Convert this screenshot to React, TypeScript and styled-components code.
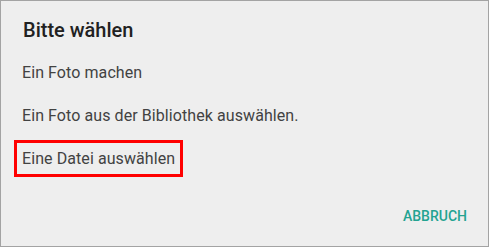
import React from "react";
import styled, { createGlobalStyle } from "styled-components";

// Auswahl-Dialog (Quelle für Datei wählen)
const options = [
  { id: "camera", label: "Ein Foto machen" },
  { id: "library", label: "Ein Foto aus der Bibliothek auswählen." },
  { id: "file", label: "Eine Datei auswählen", highlighted: true },
];

const GlobalStyle = createGlobalStyle`
  html, body {
    margin: 0;
    padding: 0;
    background: #eeeeee;
  }
  * {
    box-sizing: border-box;
  }
`;

const App: React.FC = () => {
  return (
    <>
      <GlobalStyle />
      <Dialog>
        <Title>Bitte wählen</Title>
        <OptionList>
          {options.map((option) => (
            <OptionRow key={option.id}>
              <OptionLabel $highlighted={!!option.highlighted}>
                {option.label}
              </OptionLabel>
            </OptionRow>
          ))}
        </OptionList>
        <Footer>
          <TextButton type="button">ABBRUCH</TextButton>
        </Footer>
      </Dialog>
    </>
  );
};

export default App;

const Dialog = styled.div`
  width: 489px;
  height: 247px;
  display: flex;
  flex-direction: column;
  background: #eeeeee;
  border: 1px solid #a3a3a3;
  font-family: Roboto, "Liberation Sans", sans-serif;
`;

const Title = styled.h2`
  margin: 17px 0 0;
  padding: 0 22px;
  font-size: 20px;
  line-height: 24px;
  font-weight: 500;
  color: #212121;
`;

const OptionList = styled.div`
  display: flex;
  flex-direction: column;
  margin-top: 9px;
`;

const OptionRow = styled.div`
  height: 43px;
  display: flex;
  align-items: center;
  padding: 0 21px;
`;

const OptionLabel = styled.span<{ $highlighted: boolean }>`
  font-size: 16px;
  letter-spacing: 0.08px;
  line-height: ${(p) => (p.$highlighted ? "31px" : "43px")};
  color: #424242;
  ${(p) =>
    p.$highlighted &&
    `
    margin-left: -8px;
    padding: 0 5px;
    border: 3px solid #ff0000;
  `}
`;

const Footer = styled.div`
  margin-top: auto;
  display: flex;
  justify-content: flex-end;
  padding: 0 21px 12px;
`;

const TextButton = styled.button`
  border: none;
  background: transparent;
  padding: 0;
  height: 36px;
  font-family: Roboto, "Liberation Sans", sans-serif;
  font-size: 14px;
  font-weight: 500;
  color: #23a391;
  cursor: pointer;
`;
